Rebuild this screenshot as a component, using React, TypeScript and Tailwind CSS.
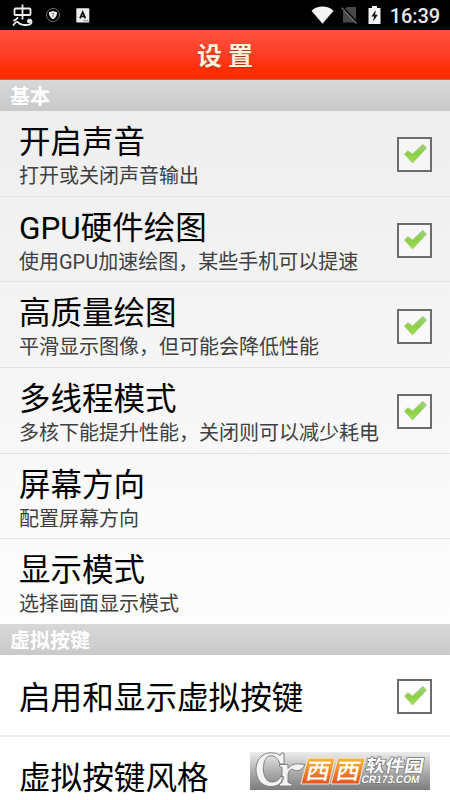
import React from 'react';

const generalItems = [
  { title: '开启声音', summary: '打开或关闭声音输出', checked: true },
  { title: 'GPU硬件绘图', summary: '使用GPU加速绘图，某些手机可以提速', checked: true },
  { title: '高质量绘图', summary: '平滑显示图像，但可能会降低性能', checked: true },
  { title: '多线程模式', summary: '多核下能提升性能，关闭则可以减少耗电', checked: true },
  { title: '屏幕方向', summary: '配置屏幕方向', checked: false },
  { title: '显示模式', summary: '选择画面显示模式', checked: false },
];

function StatusBar() {
  return (
    <div className="flex h-[30px] shrink-0 items-center justify-between bg-black pl-3 pr-[10px] text-white">
      <div className="flex items-center">
        <svg width="22" height="22" viewBox="0 0 22 22" fill="none" stroke="#eee" strokeWidth="1.800">
          <rect x="2.500" y="4.500" width="16" height="6.500" rx="1" />
          <path d="M10.500 .5v15" />
          <path d="M1.500 21c1.500-2.300 3.300-4.200 5-2.300 2 2.300 4.500 2.300 7 2.300 4.500 0 6.500-1.500 6-3.800-.4-1.700-2.700-2-3.400-.7" strokeLinecap="round" />
          <path d="M5.500 14c-.8 1.200-1.800 2-3.500 2.600" strokeLinecap="round" />
          <circle cx="17" cy="17.300" r="1.900" fill="#eee" stroke="none" />
        </svg>
        <svg className="ml-[12px]" width="14" height="14" viewBox="0 0 14 14">
          <circle cx="7" cy="7" r="6.500" fill="none" stroke="#8a8a8a" strokeWidth="0.8" />
          <path d="M2.900 4.300L7 3l4.100 1.300c0 3-1.200 5.500-4.100 6.900-2.900-1.400-4.100-3.900-4.100-6.900z" fill="#f2f2f2" />
          <path d="M7 7.300V9M5.900 5.700c.5-1 1.900-.8 1.800.2-.1.600-.7.700-.7 1.300" fill="none" stroke="#444" strokeWidth="0.8" />
        </svg>
        <svg className="ml-[16px]" width="14" height="15" viewBox="0 0 14 15">
          <rect x="0.300" y="0.200" width="13" height="14.400" rx="1" fill="#eee" />
          <path d="M4 10.300L6.700 4.200l2.700 6.100M5 8.500h3.500" fill="none" stroke="#111" strokeWidth="1.700" />
          <path d="M7.500 12.700h5" stroke="#555" strokeWidth="1" strokeDasharray="1.200 .6" />
        </svg>
      </div>
      <div className="flex items-center">
        <svg width="23" height="18" viewBox="0 0 23 18">
          <path d="M.5 4.800C6.500-.8 16.500-.8 22.500 4.800L11.500 17.800z" fill="#f5f5f5" />
        </svg>
        <svg className="ml-[6px]" width="19" height="18" viewBox="0 0 19 18">
          <path d="M7 1h9v15.500H3V5z" fill="#484848" />
          <path d="M2.500 1.500L17.500 17" stroke="#000" strokeWidth="2" />
          <path d="M1.500 1.700L16.500 17.500" stroke="#777" strokeWidth="1.200" />
        </svg>
        <svg className="ml-[9px]" width="13" height="18" viewBox="0 0 13 18">
          <path d="M4 0h5v2h3.500v16H.5V2H4z" fill="#f5f5f5" />
          <path d="M7.800 4L3.300 10.500h2.800L5 15.500l4.900-6.700H7.100z" fill="#111" />
        </svg>
        <span className="ml-[9px] pt-px text-[20px] leading-[30px] font-medium tracking-[-0.1px] text-[#e8e8e8]">16:39</span>
      </div>
    </div>
  );
}

function SectionHeader({ children }: { children: React.ReactNode }) {
  return (
    <h2 className="flex h-[31px] shrink-0 items-center bg-gradient-to-b from-[#d8d8d8] to-[#c9c9c9] pt-[3px] pl-[10px] text-[20px] leading-[28px] font-bold text-white">
      {children}
    </h2>
  );
}

function CheckBox() {
  return (
    <span className="mt-[3px] flex size-[35px] shrink-0 items-center justify-center border-2 border-[#6c6c6c] bg-white/40">
      <svg className="ml-[2px]" width="25" height="23" viewBox="0 0 25 23">
        <defs>
          <linearGradient id="tick" x1="0" y1="0" x2="0" y2="1">
            <stop offset="0" stopColor="#a3cf85" />
            <stop offset="0.500" stopColor="#8bd045" />
            <stop offset="1" stopColor="#a2dc54" />
          </linearGradient>
        </defs>
        <path
          d="M1.500 11l3.400-3.200 4.600 3.300L19.800 1.300l3.700 3.700L9.500 20z"
          fill="url(#tick)"
          stroke="#9ccb74"
          strokeWidth="0.800"
          strokeLinejoin="round"
        />
      </svg>
    </span>
  );
}

function Watermark() {
  return (
    <svg className="absolute top-[752px] left-[250px]" width="180" height="38" viewBox="0 0 180 38">
      <defs>
        <linearGradient id="plate" x1="0" y1="0" x2="0" y2="1">
          <stop offset="0" stopColor="#ededed" />
          <stop offset="0.500" stopColor="#b0b0b0" />
          <stop offset="1" stopColor="#7c7c7c" />
        </linearGradient>
        <linearGradient id="tile" x1="0" y1="0" x2="0" y2="1">
          <stop offset="0" stopColor="#f5bb36" />
          <stop offset="1" stopColor="#e8501e" />
        </linearGradient>
      </defs>
      <rect width="180" height="38" fill="url(#plate)" />
      {/* leaf-tipped emblem */}
      <path
        d="M34 1v11h-4C28 5 23 3 19 4c-8 3-8 26 3 26 4 0 7-2 9-6l3 1c-2 6-6 9.500-13 9.500C1 34.500 1 1 21 .8c4 0 7 1 9 2.700L31.500 1zM29.500 12.500H38v4c4-5.500 9-5 17-4-3 6-8 8-13 4.500-3 1-4 3-4 7v6.500l4 1.500v2H29v-2l3-1.500V15.500l-2.500-1z"
        fill="#f4f4f4"
        stroke="#777"
        strokeWidth="0.900"
      />
      <path d="M58 6h27l-6 26H51zM88 6h27l-6 26H81z" fill="url(#tile)" stroke="#f5e8d8" strokeWidth="1" />
      <g fontFamily="Noto Sans CJK SC, sans-serif" fill="#fff">
        <g fontSize="22" fontWeight="500" transform="skewX(-12)">
          <text x="60.500" y="27" textLength="24" lengthAdjust="spacingAndGlyphs">西</text>
          <text x="90.500" y="27" textLength="24" lengthAdjust="spacingAndGlyphs">西</text>
        </g>
        <text x="118.500" y="20.500" transform="skewX(-10)" fontSize="17.500" fontWeight="700" textLength="58" lengthAdjust="spacingAndGlyphs" stroke="#777" strokeWidth="1.500" paintOrder="stroke">软件园</text>
      </g>
      <text x="116.500" y="31.200" transform="skewX(-10)" fontFamily="Liberation Sans, sans-serif" fontSize="11" fontWeight="700" fill="#fff" stroke="#707070" strokeWidth="1" paintOrder="stroke" textLength="58" lengthAdjust="spacingAndGlyphs">CR173.COM</text>
    </svg>
  );
}

export default function App() {
  return (
    <div className="relative flex h-[800px] w-[450px] flex-col overflow-hidden bg-white font-[Roboto,'Noto_Sans_CJK_SC',sans-serif]">
      <StatusBar />
      <header className="flex h-[50px] shrink-0 items-center justify-center border-b border-[#d65b42] bg-gradient-to-b from-[#ff5140] to-[#ff2e00] to-80% pt-[5px]">
        <h1 className="text-[25px] leading-[40px] font-bold text-[#fff0dc] [text-shadow:0_1px_1px_#9b3a1c]">设 置</h1>
      </header>
      <SectionHeader>基本</SectionHeader>
      <div className="flex h-[513px] shrink-0 flex-col bg-gradient-to-b from-[#eeeeee] to-[#fdfdfd]">
        {generalItems.map((item, index) => (
          <div
            key={item.title}
            className={`flex flex-1 items-center justify-between pl-[19px] pr-[18px] ${index < generalItems.length - 1 ? 'border-b border-[#e2e2e2]' : ''}`}
          >
            <div className="pt-[8px] whitespace-nowrap">
              <div className="text-[31.5px] leading-[38px] text-black">{item.title}</div>
              <div className="text-[20px] leading-[29px] text-[#404040]">{item.summary}</div>
            </div>
            {item.checked && <CheckBox />}
          </div>
        ))}
      </div>
      <SectionHeader>虚拟按键</SectionHeader>
      <div className="flex h-[82px] shrink-0 items-center justify-between border-b-2 border-[#eeeeee] pl-[19px] pr-[18px]">
        <div className="pt-[7px] text-[31.6px] leading-[38px] text-black">启用和显示虚拟按键</div>
        <CheckBox />
      </div>
      <div className="flex h-[81px] shrink-0 items-center pt-[2px] pl-[19px]">
        <div className="text-[31.6px] leading-[38px] text-black">虚拟按键风格</div>
      </div>
      <Watermark />
    </div>
  );
}
